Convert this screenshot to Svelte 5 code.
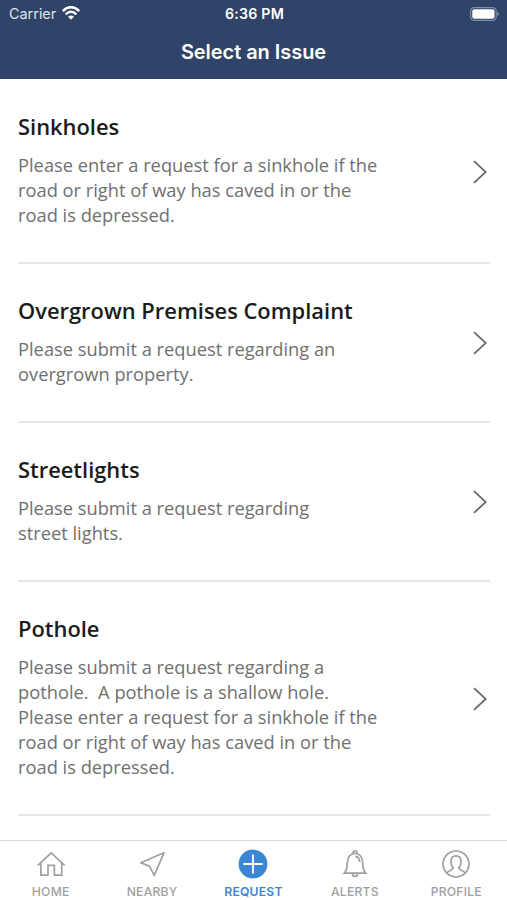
<script>
	const issues = [
		{
			title: 'Sinkholes',
			lines: [
				'Please enter a request for a sinkhole if the',
				'road or right of way has caved in or the',
				'road is depressed.'
			]
		},
		{
			title: 'Overgrown Premises Complaint',
			lines: ['Please submit a request regarding an', 'overgrown property.']
		},
		{
			title: 'Streetlights',
			lines: ['Please submit a request regarding', 'street lights.']
		},
		{
			title: 'Pothole',
			lines: [
				'Please submit a request regarding a',
				'pothole.  A pothole is a shallow hole.',
				'Please enter a request for a sinkhole if the',
				'road or right of way has caved in or the',
				'road is depressed.'
			]
		}
	];

	const tabs = ['home', 'nearby', 'request', 'alerts', 'profile'];

	let active = $state('request');
</script>

<div class="screen">
	<header>
		<div class="status">
			<div class="carrier">
				<span>Carrier</span>
				<svg width="18" height="14" viewBox="0 0 18 14" fill="none" stroke="#fff" stroke-width="2.5">
					<path d="M.8 5Q9-2.7 17.2 5" />
					<path d="M3.7 8.3Q9 3.3 14.3 8.3" />
					<path d="M6 10.8Q9 8.1 12 10.8L9 13.8Z" fill="#fff" stroke="none" />
				</svg>
			</div>
			<div class="time">6:36 PM</div>
			<div class="battery">
				<svg width="30" height="14" viewBox="0 0 30 14">
					<rect x=".6" y=".6" width="25.6" height="12.8" rx="3.6" fill="none" stroke="#8190aa" stroke-width="1.2" />
					<rect x="2.3" y="2.3" width="22.2" height="9.4" rx="2" fill="#fff" />
					<path d="M27.4 4.8Q30.6 7 27.4 9.2Z" fill="#8190aa" />
				</svg>
			</div>
		</div>
		<h1>Select an Issue</h1>
	</header>

	<main>
		{#each issues as issue}
			<div class="issue">
				<div>
					<h2>{issue.title}</h2>
					<p>{issue.lines.join('\n')}</p>
				</div>
				<svg class="chevron" width="14" height="24" viewBox="0 0 14 24">
					<path d="M1 1.2L12.8 12L1 22.8" fill="none" stroke="#666" stroke-width="1.7" />
				</svg>
			</div>
		{/each}
	</main>

	<nav>
		{#each tabs as tab}
			<button class:active={active === tab} onclick={() => (active = tab)}>
				<svg width="30" height="30" viewBox="0 0 30 30" fill="none" stroke="currentColor" stroke-width="1.7">
					{#if tab === 'home'}
						<path d="M1.8 16.4L15.2 4L28.6 16.4M4.9 14.2V26.1H12V16.4H18.4V26.1H25.7V14.2" />
					{:else if tab === 'nearby'}
						<path d="M27 3.8L3.8 13.7L12.7 17.4L17.2 26.4Z" stroke-linejoin="round" />
					{:else if tab === 'request'}
						<circle cx="15" cy="15" r="14.4" fill="currentColor" stroke="none" />
						<path d="M15 5.4V24.6M5.4 15H24.6" stroke="#fff" stroke-width="1.9" />
					{:else if tab === 'alerts'}
						<path d="M4.2 24.2C7.3 20.8 7.2 18 7.4 13.2C7.6 8 10.6 4.3 15 4.3S22.4 8 22.6 13.2C22.8 18 22.7 20.8 25.8 24.2Z" />
						<path d="M12.9 4.2A2.1 2.3 0 0 1 17.1 4.2M12.5 24.4A2.5 3 0 0 0 17.5 24.4M15.3 7.3Q19.4 7.6 19.6 13" />
					{:else}
						<circle cx="15" cy="15" r="13" />
						<path d="M5.7 24C7.2 21.2 12.3 21.5 12.3 18.6C10.4 17 10 14.7 10 12C10 8.6 11.9 6.8 15 6.8S20 8.6 20 12C20 14.7 19.6 17 17.7 18.6C17.7 21.5 22.8 21.2 24.3 24" />
					{/if}
				</svg>
				<span>{tab.toUpperCase()}</span>
			</button>
		{/each}
	</nav>
</div>

<style>
	:global(body) {
		margin: 0;
		background: #fff;
	}

	.screen {
		display: flex;
		flex-direction: column;
		height: 100vh;
		overflow: hidden;
		font-family: 'Open Sans', sans-serif;
	}

	header {
		flex: none;
		box-sizing: border-box;
		height: 79px;
		background: #2f4468;
		color: #fff;
		font-family: Inter, sans-serif;
	}

	.status {
		display: grid;
		grid-template-columns: 1fr auto 1fr;
		align-items: center;
		height: 27px;
		padding: 0 7px 0 9px;
	}

	.carrier {
		display: flex;
		align-items: center;
		gap: 6px;
		font-size: 14.4px;
		color: #dfe4ec;
	}

	.carrier svg {
		margin-top: -2px;
	}

	.time {
		font-size: 14.2px;
		font-weight: 600;
		letter-spacing: 0.2px;
	}

	.battery {
		display: flex;
		justify-content: flex-end;
	}

	h1 {
		margin: 0;
		font-size: 20px;
		font-weight: 600;
		line-height: 51px;
		letter-spacing: -0.05px;
		text-align: center;
	}

	main {
		flex: 1;
		min-height: 0;
		overflow: hidden;
		padding: 1px 17px 0 18px;
	}

	.issue {
		display: flex;
		align-items: center;
		justify-content: space-between;
		padding: 32px 3px 35px 0;
		border-bottom: 2px solid #e6e6e6;
	}

	h2 {
		margin: 0 0 10px;
		font-size: 21.9px;
		font-weight: 600;
		line-height: 30px;
		color: #1c1c1c;
	}

	p {
		margin: 0;
		font-size: 18.3px;
		line-height: 25px;
		color: #707070;
		white-space: pre;
	}

	.chevron {
		flex: none;
		margin-top: 4px;
	}

	nav {
		flex: none;
		display: grid;
		grid-template-columns: repeat(5, 1fr);
		box-sizing: border-box;
		height: 60px;
		border-top: 1px solid #dedede;
		background: #fff;
	}

	button {
		display: flex;
		flex-direction: column;
		align-items: center;
		padding: 8px 0 0;
		border: 0;
		background: none;
		color: #a0a0a0;
		font: 500 12.2px/18px Inter, sans-serif;
		letter-spacing: 0.2px;
	}

	button span {
		margin-top: 4px;
	}

	.active {
		color: #3b87d3;
		font-weight: 600;
	}
</style>
